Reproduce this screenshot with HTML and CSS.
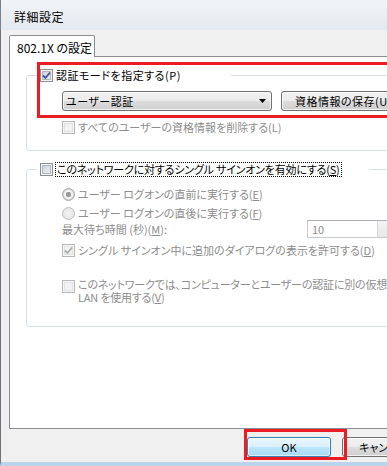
FILE: index.html
```html
<!DOCTYPE html>
<html lang="ja">
<head>
    <meta charset="UTF-8">
    <meta name="viewport" content="width=device-width, initial-scale=1.0">
    <title>詳細設定</title>
    <link rel="stylesheet" href="styles.css">
</head>
<body>
<div class="window">
    <!-- Title bar -->
    <div class="titlebar">詳細設定</div>

    <div class="frame">
        <div class="frame-edge"></div>
        <div class="client">
            <!-- Tabs -->
            <div class="tabs">
                <div class="tab">802.1X の設定</div>
            </div>

            <div class="panel">
                <!-- Authentication mode -->
                <fieldset class="group">
                    <legend class="group-label group-label-auth">
                        <span class="option">
                            <span class="box"><svg viewBox="0 0 11 11"><path d="M2 5.5 L4.5 8 L9 2.5" class="tick"/></svg></span>
                            <span class="wide">認証モードを指定する(P)</span>
                        </span>
                    </legend>
                    <div class="group-body group-body-auth">
                        <div class="combo-row">
                            <div class="combo">
                                <span class="wide">ユーザー認証</span>
                                <svg class="combo-arrow" viewBox="0 0 7 4"><path d="M0 0 H7 L3.5 4 Z"/></svg>
                            </div>
                            <div class="btn btn-save wide">資格情報の保存(U)...</div>
                        </div>
                        <div class="option option-disabled option-spaced">
                            <span class="box box-disabled"></span>
                            <span>すべてのユーザーの資格情報を削除する(L)</span>
                        </div>
                    </div>
                </fieldset>

                <!-- Single sign on -->
                <fieldset class="group group-sso">
                    <legend class="group-label group-label-sso">
                        <span class="option">
                            <span class="box"></span>
                            <span class="focus tight">このネットワークに対するシングル サインオンを有効にする(<u>S</u>)</span>
                        </span>
                    </legend>
                    <div class="group-body group-body-sso">
                        <div class="option option-disabled">
                            <span class="radio radio-checked"></span>
                            <span>ユーザー ログオンの直前に実行する(<u>E</u>)</span>
                        </div>
                        <div class="option option-disabled option-radio2">
                            <span class="radio"></span>
                            <span>ユーザー ログオンの直後に実行する(<u>F</u>)</span>
                        </div>
                        <div class="wait-row option-disabled">
                            <span class="wait-label">最大待ち時間 (秒)(<u>M</u>):</span>
                            <div class="spin-field">
                                <span class="spin-value">10</span>
                                <span class="spin-buttons"></span>
                            </div>
                        </div>
                        <div class="option option-disabled option-dialog">
                            <span class="box box-disabled"><svg viewBox="0 0 11 11"><path d="M2 5.5 L4.5 8 L9 2.5" class="tick tick-disabled"/></svg></span>
                            <span>シングル サインオン中に追加のダイアログの表示を許可する(<u>D</u>)</span>
                        </div>
                        <div class="option option-disabled option-multi">
                            <span class="box box-disabled"></span>
                            <span class="tight">このネットワークでは、コンピューターとユーザーの認証に別の仮想<br>LAN を使用する(<u>V</u>)</span>
                        </div>
                    </div>
                </fieldset>
            </div>

            <!-- Dialog buttons -->
            <div class="buttons">
                <div class="btn btn-default">OK</div>
                <div class="btn btn-cancel">キャンセル</div>
            </div>
        </div>
    </div>

    <!-- Red highlight marks -->
    <div class="mark mark-auth"></div>
    <div class="mark mark-ok"></div>
</div>
</body>
</html>
```

FILE: styles.css
```css
*{
    margin: 0;
    padding: 0;
    box-sizing: border-box;
}
body {
    font-family: "Noto Sans CJK JP", "Noto Sans", sans-serif;
    font-size: 11px;
    font-feature-settings: "palt";
    color: #000;
    background: #fff;
    width: 387px;
    height: 466px;
    overflow: hidden;
}
u {
    text-decoration-thickness: 1px;
    text-underline-offset: 1px;
}
.wide {
    letter-spacing: 0.5px;
}
.tight {
    letter-spacing: -0.2px;
}

/* Window frame */
.window {
    position: relative;
    width: 387px;
    height: 466px;
    overflow: hidden;
    background: #e9eef3;
}
.titlebar {
    height: 30px;
    padding: 10px 0 0 13px;
    font-size: 12px;
    line-height: 14px;
    letter-spacing: 0.5px;
    background: linear-gradient(#f1f4f7, #e4e9ef);
    border-left: 1px solid #7d8186;
}
.frame {
    display: flex;
    height: 436px;
    border-bottom: 4px solid #bcd3ec;
    border-left: 1px solid #6f7377;
}
.frame-edge {
    width: 6px;
    background: #bcd3ec;
}
.client {
    flex: 1;
    background: #f0f0f0;
    padding: 5px 0 0 8px;
    display: flex;
    flex-direction: column;
}

/* Tabs */
.tabs {
    display: flex;
}
.tab {
    position: relative;
    z-index: 1;
    width: 86px;
    height: 22px;
    margin-bottom: -1px;
    padding: 5px 0 0 7px;
    font-size: 12px;
    line-height: 13px;
    background: #fff;
    border: 1px solid #898c95;
    border-bottom: none;
    border-radius: 2px 2px 0 0;
}
.panel {
    width: 400px;
    height: 373px;
    padding: 11px 0 0 16px;
    background: #fff;
    border: 1px solid #898c95;
}

/* Group boxes */
.group {
    width: 380px;
    border: 1px solid #d5dfe5;
    border-radius: 3px;
    padding: 0;
}
.group-sso {
    margin-top: 11px;
}
.group-label {
    height: 15px;
    margin-left: 10px;
    padding: 0 3px;
    display: flex;
    align-items: center;
}
.group-label-auth {
    width: 194px;
}
.group-label-sso {
    width: 332px;
}
.group-body {
    padding-left: 35px;
}
.group-body-auth {
    padding-top: 8px;
    padding-bottom: 16px;
}
.group-body-sso {
    padding-top: 11px;
    padding-bottom: 22px;
}

/* Check boxes and radios */
.option {
    display: flex;
    align-items: center;
    gap: 3px;
    height: 13px;
    line-height: 13px;
    white-space: nowrap;
}
.option-disabled {
    color: #8d8d8d;
}
.option-spaced {
    margin-top: 10px;
}
.option-radio2 {
    margin-top: 6px;
}
.option-dialog {
    margin-top: 6px;
}
.option-multi {
    align-items: flex-start;
    height: 26px;
    margin-top: 21px;
    line-height: 13px;
}
.option-multi .box {
    margin-top: 2px;
}
.focus {
    padding: 0 1px;
    line-height: 13px;
    outline: 1px dotted #000;
}
.box {
    flex: none;
    width: 13px;
    height: 13px;
    border: 1px solid #8e8f8f;
    background: linear-gradient(135deg, #c6cbd2, #f6f6f6);
    box-shadow: inset 0 0 0 1px #f4f4f4, inset 0 0 0 2px #b2b7be;
}
.box svg {
    display: block;
    width: 11px;
    height: 11px;
}
.box-disabled {
    border-color: #b7b7b7;
    background: #f2f2f2;
    box-shadow: inset 0 0 0 1px #f7f7f7, inset 0 0 0 2px #e2e2e2;
}
.tick {
    fill: none;
    stroke: #41559b;
    stroke-width: 1.8;
}
.tick-disabled {
    stroke: #adadad;
}
.radio {
    flex: none;
    width: 13px;
    height: 13px;
    border-radius: 50%;
    border: 1px solid #bdbdbd;
    background: radial-gradient(circle, #f4f4f4, #e2e2e2);
}
.radio-checked {
    border-color: #a9a9a9;
    background: radial-gradient(circle, #9c9c9c 0 2.5px, #f4f4f4 3px 4px, #d6d6d6 5px);
}

/* Combo and buttons */
.combo-row {
    display: flex;
    gap: 9px;
}
.combo {
    display: flex;
    align-items: center;
    width: 210px;
    height: 20px;
    padding-left: 3px;
    border: 1px solid #707070;
    border-radius: 3px;
    background: linear-gradient(#f2f2f2 0%, #ebebeb 50%, #dddddd 50%, #cfcfcf 100%);
    box-shadow: inset 0 0 0 1px rgba(255, 255, 255, 0.7);
}
.combo-arrow {
    width: 7px;
    height: 4px;
    margin-left: auto;
    margin-right: 5px;
}
.btn {
    height: 20px;
    line-height: 18px;
    border: 1px solid #707070;
    border-radius: 3px;
    background: linear-gradient(#f2f2f2 0%, #ebebeb 50%, #dddddd 50%, #cfcfcf 100%);
    box-shadow: inset 0 0 0 1px rgba(255, 255, 255, 0.7);
    white-space: nowrap;
}
.btn-save {
    width: 120px;
    padding-left: 13px;
}
.buttons {
    display: flex;
    gap: 11px;
    margin-top: 8px;
    padding-left: 238px;
}
.btn-default,
.btn-cancel {
    flex: none;
    width: 84px;
    text-align: center;
}
.btn-default {
    border-color: #3c7fb1;
    background: linear-gradient(#eaf6fd 0%, #d9f0fc 50%, #bee6fd 50%, #a7d9f5 100%);
    box-shadow: inset 0 0 0 1px rgba(255, 255, 255, 0.6), 0 0 1px #6cc4f0;
}

/* Wait time row */
.wait-row {
    display: flex;
    align-items: center;
    height: 18px;
    line-height: 13px;
}
.wait-label {
    width: 245px;
}
.spin-field {
    display: flex;
    width: 90px;
    height: 18px;
    border: 1px solid #c6c8cc;
    border-top-color: #abadb3;
    background: #fff;
}
.spin-value {
    width: 69px;
    padding-left: 4px;
    line-height: 16px;
}
.spin-buttons {
    width: 16px;
    border-left: 1px solid #d7d7d7;
    background: linear-gradient(#f4f4f4, #e8e8e8);
}

/* Red highlight marks */
.mark {
    position: absolute;
    border: 3px solid #ec1c24;
}
.mark-auth {
    left: 37px;
    top: 62px;
    width: 360px;
    height: 56px;
}
.mark-ok {
    left: 244px;
    top: 429px;
    width: 103px;
    height: 31px;
}
```
